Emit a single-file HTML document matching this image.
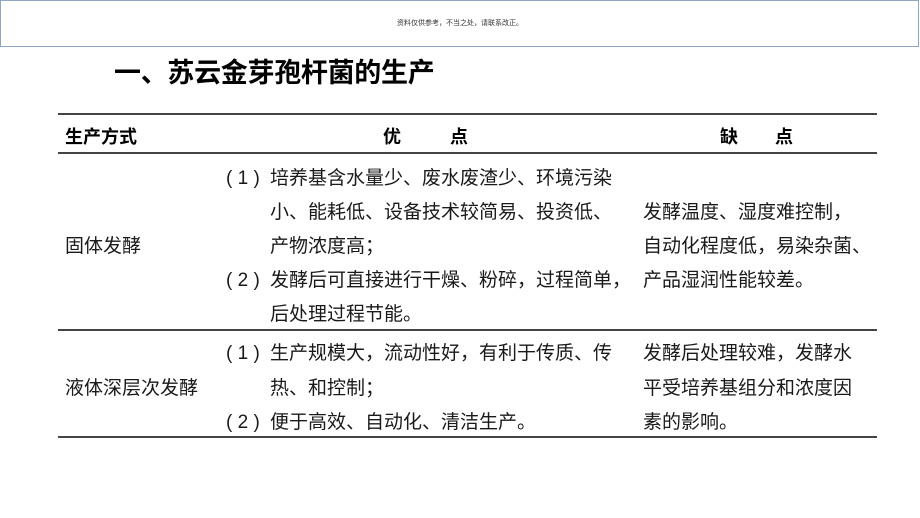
<!DOCTYPE html>
<html><head><meta charset="utf-8"><style>
body{margin:0;width:920px;height:518px;background:#fff;position:relative;overflow:hidden;font-family:"Liberation Sans","Noto Sans CJK SC",sans-serif;color:#1a1a1a}
.box{position:absolute;left:0;top:0;width:917px;height:45px;border:1.5px solid #8fa6c4}
.note{position:absolute;top:18px;left:0;width:920px;text-align:center;font-size:7px;color:#333}
.t{position:absolute;white-space:nowrap;font-size:19px;line-height:20px}
.h{font-weight:bold;font-size:18px;color:#000}
.ln{position:absolute;left:58px;width:819px;height:2px;background:#444}
.title{position:absolute;left:114px;top:51px;font-size:27px;font-weight:bold;color:#000;white-space:nowrap;letter-spacing:-0.3px}
</style></head><body>
<div class="box"></div>
<div class="note">资料仅供参考，不当之处，请联系改正。</div>
<div class="title">一、苏云金芽孢杆菌的生产</div>
<div class="ln" style="top:113px"></div>
<div class="ln" style="top:152px"></div>
<div class="ln" style="top:329px"></div>
<div class="ln" style="top:436px"></div>
<div class="t h" style="left:65px;top:127px">生产方式</div>
<div class="t h" style="left:383px;top:127px">优</div>
<div class="t h" style="left:450px;top:127px">点</div>
<div class="t h" style="left:720px;top:127px">缺</div>
<div class="t h" style="left:775px;top:127px">点</div>
<div class="t" style="left:65px;top:237px">固体发酵</div>
<div class="t" style="left:226px;top:169px">(&nbsp;1&nbsp;)</div>
<div class="t" style="left:270px;top:169px">培养基含水量少、废水废渣少、环境污染</div>
<div class="t" style="left:270px;top:203px">小、能耗低、设备技术较简易、投资低、</div>
<div class="t" style="left:270px;top:237px">产物浓度高；</div>
<div class="t" style="left:226px;top:271px">(&nbsp;2&nbsp;)</div>
<div class="t" style="left:270px;top:271px">发酵后可直接进行干燥、粉碎，过程简单，</div>
<div class="t" style="left:270px;top:305px">后处理过程节能。</div>
<div class="t" style="left:643px;top:203px">发酵温度、湿度难控制，</div>
<div class="t" style="left:643px;top:237px">自动化程度低，易染杂菌、</div>
<div class="t" style="left:643px;top:271px">产品湿润性能较差。</div>
<div class="t" style="left:65px;top:379px">液体深层次发酵</div>
<div class="t" style="left:226px;top:344px">(&nbsp;1&nbsp;)</div>
<div class="t" style="left:270px;top:344px">生产规模大，流动性好，有利于传质、传</div>
<div class="t" style="left:270px;top:379px">热、和控制；</div>
<div class="t" style="left:226px;top:413px">(&nbsp;2&nbsp;)</div>
<div class="t" style="left:270px;top:413px">便于高效、自动化、清洁生产。</div>
<div class="t" style="left:643px;top:344px">发酵后处理较难，发酵水</div>
<div class="t" style="left:643px;top:379px">平受培养基组分和浓度因</div>
<div class="t" style="left:643px;top:413px">素的影响。</div>
</body></html>
